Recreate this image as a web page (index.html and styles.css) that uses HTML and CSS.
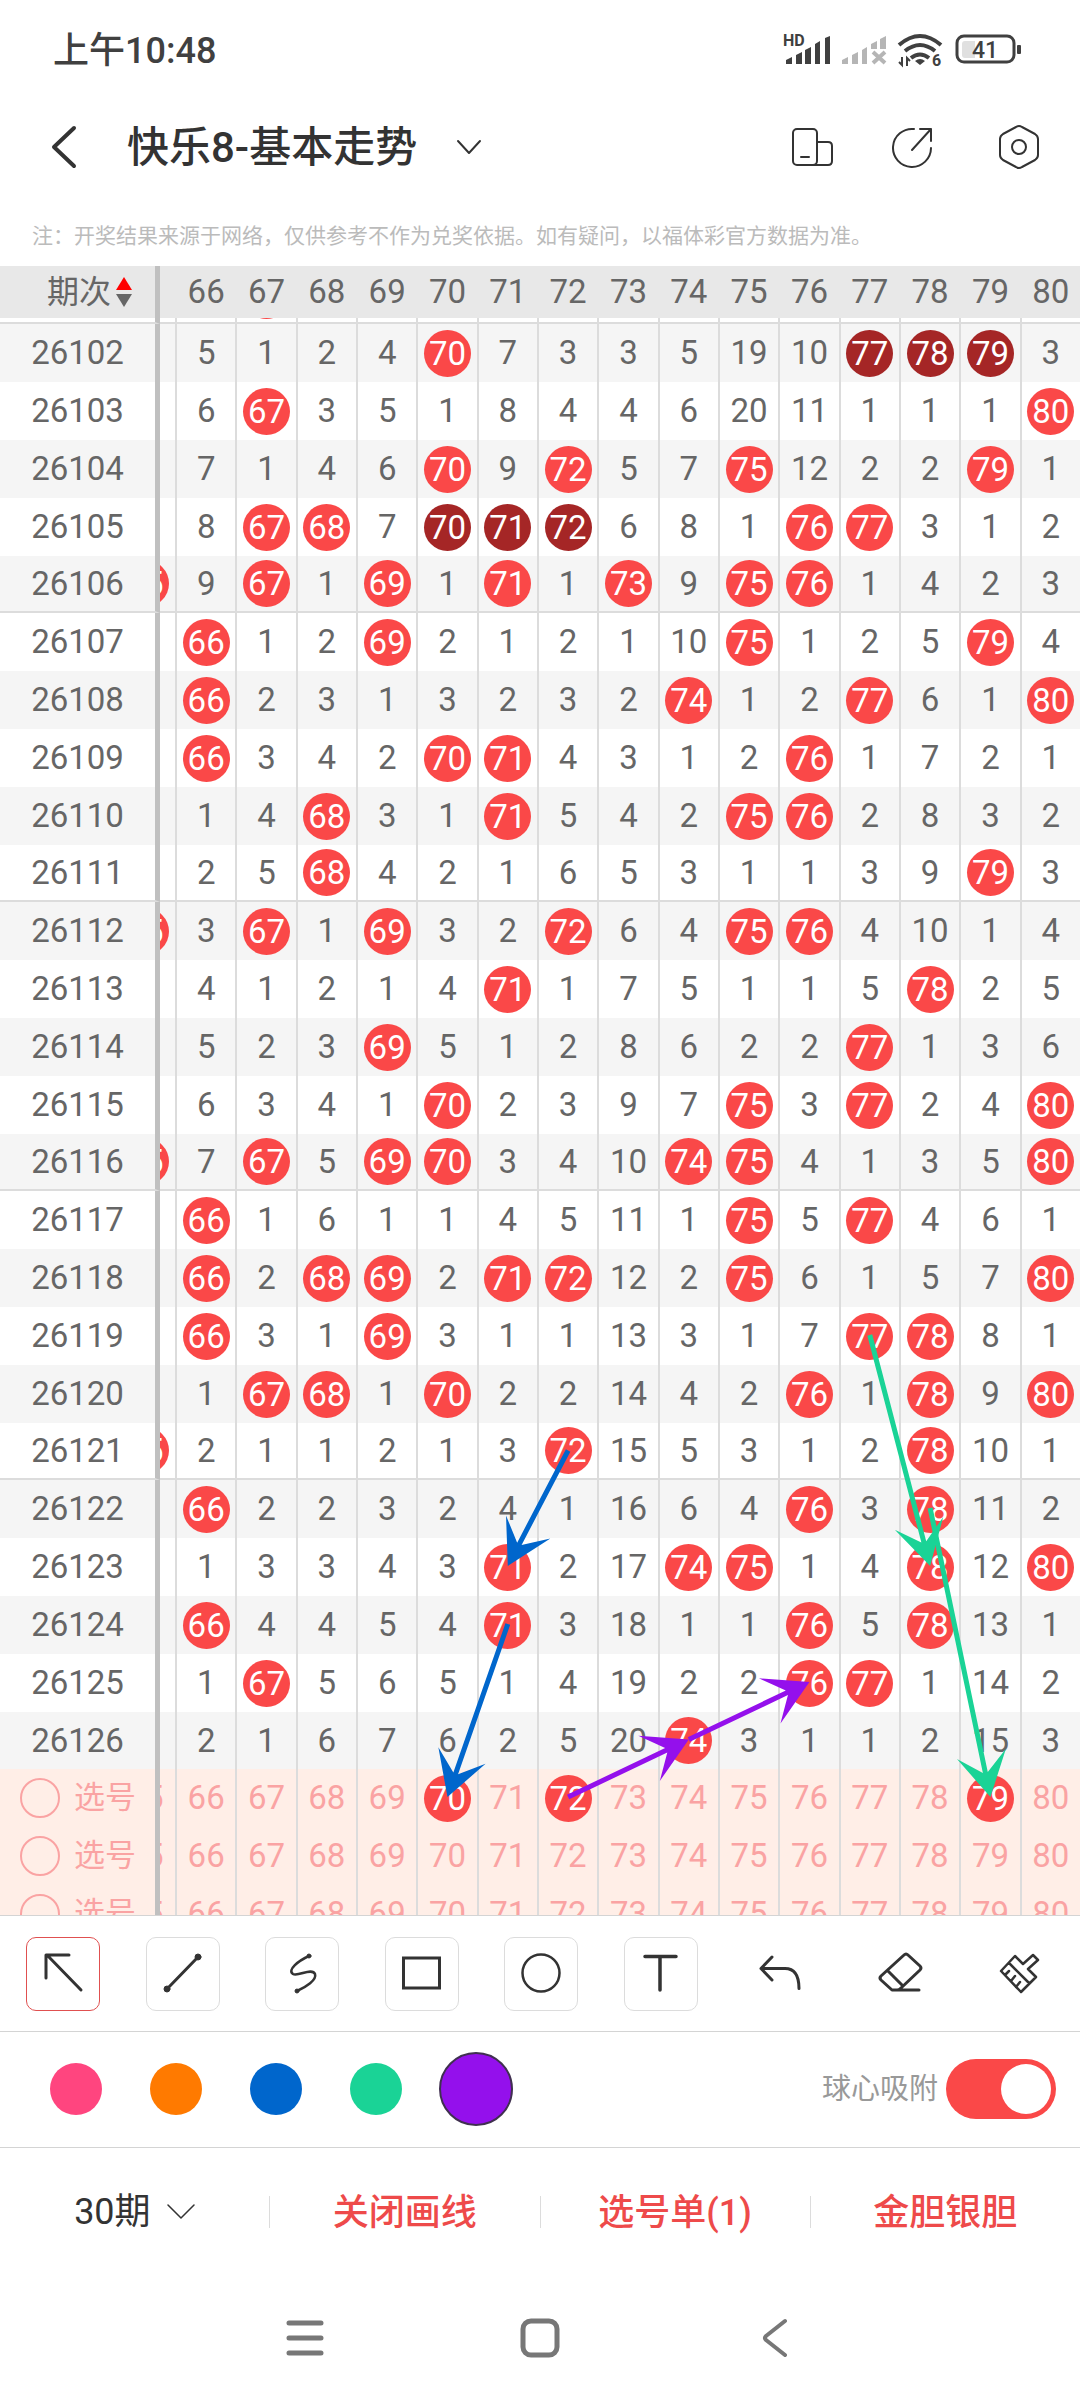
FILE: index.html
```html
<!DOCTYPE html>
<html lang="zh-CN">
<head>
    <meta charset="UTF-8">
    <meta name="viewport" content="width=device-width, initial-scale=1.0">
    <title>快乐8-基本走势</title>
    <link rel="stylesheet" href="styles.css">
</head>
<body>

    <div class="status-bar">
        <span class="time">上午10:48</span>
        <svg class="status-icons" width="240" height="40" viewBox="782 30 240 40">
            <text x="783" y="46" class="hd">HD</text>
            <g fill="#404040">
                <path d="M786 60l6-3v7h-6zM796 55l6-3v12h-6zM805 50l6-3v17h-6zM815 44l5-3v23h-5zM825 38l5-2v28h-5z"/>
            </g>
            <g fill="#b5b5b5">
                <path d="M842 60l6-3v7h-6zM852 55l6-3v12h-6zM862 50l5-3v17h-5zM871 44l6-3v8h-6zM880 39l6-3v13h-6z"/>
                <path d="M873 52l12 11M885 52l-12 11" stroke="#b5b5b5" stroke-width="4"/>
            </g>
            <g fill="none" stroke="#404040" stroke-width="4">
                <path d="M899 45q21 -18 42 0M905 51q15 -12 30 0M911 58q9 -7 18 0"/>
            </g>
            <path d="M915 61q5 -4 10 0l-5 4z" fill="#404040"/>
            <path d="M902 57v8l-3-3M907 66v-8l3 3" fill="none" stroke="#404040" stroke-width="2"/>
            <text x="932" y="66" class="wifi-gen">6</text>
            <rect x="957" y="36" width="57" height="26" rx="7" fill="none" stroke="#404040" stroke-width="3"/>
            <path d="M965 41h10v17h-10q-3 0-3-3v-11q0-3 3-3z" fill="#e0e0e0"/>
            <rect x="1017" y="45" width="4" height="9" rx="1" fill="#404040"/>
            <text x="985" y="58" text-anchor="middle" class="battery">41</text>
        </svg>
    </div>

    <header class="title-bar">
        <button type="button" class="icon-btn back" aria-label="返回">
            <svg width="30" height="46" viewBox="0 0 30 46"><path d="M26 4L6 23l20 19" stroke-width="4"/></svg>
        </button>
        <label class="picker title-picker">
            <select aria-label="走势类型"><option>快乐8-基本走势</option></select>
            <svg width="26" height="16" viewBox="0 0 26 16"><path d="M2 2l11 12L24 2" stroke-width="2"/></svg>
        </label>
        <div class="title-actions">
            <button type="button" class="icon-btn" aria-label="横屏">
                <svg width="46" height="46" viewBox="0 0 46 46"><g stroke-width="2"><rect x="5" y="5" width="24" height="36" rx="4"/><path d="M29 18h11q4 0 4 4v15q0 4-4 4H25M13 33h8"/></g></svg>
            </button>
            <button type="button" class="icon-btn" aria-label="分享">
                <svg width="46" height="46" viewBox="0 0 46 46"><g stroke-width="2"><path d="M22 5a19 19 0 1 0 17 19M28 5h11v12M20 26L39 5"/></g></svg>
            </button>
            <button type="button" class="icon-btn" aria-label="设置">
                <svg width="46" height="46" viewBox="0 0 46 46"><g stroke-width="2"><path d="M20 3q3-2 6 0l13 7q3 2 3 5v16q0 3-3 5l-13 7q-3 2-6 0l-13-7q-3-2-3-5V15q0-3 3-5z"/><circle cx="23" cy="23" r="7"/></g></svg>
            </button>
        </div>
    </header>

    <p class="note">注：开奖结果来源于网络，仅供参考不作为兑奖依据。如有疑问，以福体彩官方数据为准。</p>

    <main class="chart" id="chart">
        <table id="trend">
            <thead><tr id="headRow">
                <th class="issue">
                    <button type="button" class="sort">期次
                        <svg width="16" height="32" viewBox="0 0 16 32"><path d="M8 1l8 13H0z" fill="#f00"/><path d="M8 31l8-13H0z" fill="#666"/></svg>
                    </button>
                </th>
            </tr></thead>
            <tbody id="trendBody"></tbody>
            <tbody id="pickBody"></tbody>
        </table>
        <svg class="lines" id="lines"></svg>
    </main>

    <section class="tools">
        <button type="button" class="tool active" aria-label="箭头"><svg viewBox="0 0 74 74"><path d="M55 53L21 18M43 18H20v23" stroke-width="3"/></svg></button>
        <button type="button" class="tool" aria-label="直线"><svg viewBox="0 0 74 74"><path d="M21 52L52 20" stroke-width="3"/><circle cx="21" cy="52" r="3"/><circle cx="52" cy="20" r="3"/></svg></button>
        <button type="button" class="tool" aria-label="曲线"><svg viewBox="0 0 74 74"><path d="M44 19C33 24 22 33 28 37C33 40 47 30 50 37C52 43 41 50 32 54" stroke-width="2.5"/><circle cx="44" cy="19" r="2"/><circle cx="32" cy="54" r="2"/></svg></button>
        <button type="button" class="tool" aria-label="矩形"><svg viewBox="0 0 74 74"><rect x="18.5" y="21" width="36" height="30" stroke-width="3" stroke-linejoin="miter"/></svg></button>
        <button type="button" class="tool" aria-label="圆形"><svg viewBox="0 0 74 74"><circle cx="37" cy="36" r="18.5" stroke-width="2.5"/></svg></button>
        <button type="button" class="tool" aria-label="文字"><svg viewBox="0 0 74 74"><path d="M21 19.5h31M36 20v33" stroke-width="3.5"/></svg></button>
        <button type="button" class="tool plain" aria-label="撤销"><svg viewBox="0 0 74 74"><path d="M29 20L18 31.5L29 43M18 31.5h24q14 0 14 20" stroke-width="3"/></svg></button>
        <button type="button" class="tool plain" aria-label="橡皮"><svg viewBox="0 0 74 74"><path d="M41 18q2-2 4 0l12 11q2 2 0 4L38 51q-2 2-4 2h-5L18 43q-2-2 0-4zM25 34l14 14M32 53h24" stroke-width="3"/></svg></button>
        <button type="button" class="tool plain" aria-label="清空"><svg viewBox="0 0 74 74"><path d="M33 19l8 8 10-9 5 5-10 9 8 8-15 15-20-21zM27 26l20 20M23 38l4-4M29 44l4-5M34 50l4-5" stroke-width="2.5"/></svg></button>
    </section>

    <section class="palette">
        <label class="swatch pink"><input type="radio" name="color" aria-label="粉色"></label>
        <label class="swatch orange"><input type="radio" name="color" aria-label="橙色"></label>
        <label class="swatch blue"><input type="radio" name="color" aria-label="蓝色"></label>
        <label class="swatch green"><input type="radio" name="color" aria-label="绿色"></label>
        <label class="swatch purple"><input type="radio" name="color" aria-label="紫色" checked></label>
        <label class="snap" for="snap">球心吸附</label>
        <input type="checkbox" class="switch" id="snap" checked>
    </section>

    <section class="actions">
        <label class="picker period">
            <select aria-label="期数"><option>30期</option></select>
            <svg width="28" height="16" viewBox="0 0 28 16"><path d="M1 1l13 13L27 1" stroke-width="1.5"/></svg>
        </label>
        <button type="button">关闭画线</button>
        <button type="button">选号单(1)</button>
        <button type="button">金胆银胆</button>
    </section>

    <nav class="system-nav">
        <button type="button" aria-label="最近任务"><svg viewBox="0 0 48 48"><path d="M8 9h32M8 24h32M8 39h32" stroke-width="5"/></svg></button>
        <button type="button" aria-label="主屏幕"><svg viewBox="0 0 48 48"><rect x="7" y="7" width="34" height="34" rx="8" stroke-width="5"/></svg></button>
        <button type="button" aria-label="返回"><svg viewBox="0 0 48 48"><path d="M34 7L15 22q-2 2 0 4L34 41" stroke-width="4"/></svg></button>
    </nav>

    <script src="script.js"></script>
</body>
</html>
```

FILE: styles.css
```css
* {
    box-sizing: border-box;
}

body {
    margin: 0;
    height: 100vh;
    display: flex;
    flex-direction: column;
    background-color: #fff;
    color: #333;
    font-family: Roboto, "Noto Sans CJK SC", sans-serif;
}

button, select {
    margin: 0;
    padding: 0;
    border: none;
    background: none;
    color: inherit;
    font: inherit;
    appearance: none;
    cursor: pointer;
}

button svg, .picker svg {
    display: block;
    fill: none;
    stroke: #333;
    stroke-linecap: round;
    stroke-linejoin: round;
}

/* status bar */
.status-bar {
    height: 100px;
    padding: 0 58px 0 53px;
    display: flex;
    align-items: center;
    justify-content: space-between;
}

.time {
    padding-bottom: 6px;
    font-size: 36px;
    font-weight: 500;
    color: #404040;
}

.status-icons text {
    fill: #404040;
}

.hd {
    font-size: 16px;
    font-weight: 700;
}

.wifi-gen {
    font-size: 16px;
    font-weight: 700;
}

.battery {
    font-size: 23px;
    font-weight: 500;
}

/* title */
.title-bar {
    height: 94px;
    padding: 0 38px 0 48px;
    display: flex;
    align-items: center;
}

.back {
    margin-right: 49px;
}

.picker {
    display: flex;
    align-items: center;
}

.title-picker {
    gap: 38px;
    font-size: 42px;
    font-weight: 500;
}

.title-actions {
    margin-left: auto;
    display: flex;
    gap: 58px;
}

.note {
    margin: 0;
    padding: 26px 32px 14px;
    font-size: 21px;
    line-height: 32px;
    color: #bbb;
    white-space: nowrap;
}

/* trend chart */
.chart {
    position: relative;
    flex: 1;
    min-height: 0;
    overflow: hidden;
}

table {
    width: calc(100% + 2px);
    table-layout: fixed;
    border-collapse: separate;
    border-spacing: 0;
    font-size: 33px;
    line-height: 40px;
    color: #666;
}

th, td {
    height: 58px;
    padding: 0;
    text-align: center;
    font-weight: 400;
    border-right: 2px solid #dcdcdc;
}

thead th {
    height: 52px;
    background-color: #e8e8e8;
    border-right-color: #e8e8e8;
}

.issue {
    width: 160px;
    border-right: 5px solid #c0c0c0;
}

thead .issue {
    border-right-color: #c0c0c0;
}

/* column 65, scrolled under the issue column */
.edge {
    width: 17px;
    overflow: hidden;
}

.edge div {
    display: flex;
    justify-content: flex-end;
    overflow: hidden;
}

.edge span {
    flex: none;
    width: 60px;
    display: flex;
    justify-content: center;
}

.sort {
    display: flex;
    align-items: center;
    gap: 5px;
    padding-left: 47px;
    font-size: 32px;
}

.sort svg {
    stroke: none;
}

#trendBody tr:nth-child(even) {
    background-color: #f5f5f5;
}

#trendBody tr:nth-child(5n+1) > * {
    height: 57px;
    border-bottom: 2px solid #dcdcdc;
}

#trendBody tr.last > * {
    border-bottom: none;
}

#trendBody tr.peek > * {
    height: 6px;
}

.peek div {
    height: 4px;
    padding-bottom: 3px;
    display: flex;
    align-items: flex-end;
    justify-content: center;
    overflow: hidden;
}

.ball {
    flex: none;
    display: block;
    width: 47px;
    height: 47px;
    margin: 0 auto;
    border-radius: 50%;
    background-color: #fa4848;
    color: #fff;
    line-height: 48px;
}

.ball.dark {
    background-color: #a52626;
}

.edge .ball {
    width: 47px;
    margin: 0;
}

#pickBody tr {
    background-color: #ffeee7;
    color: #faa3a3;
}

.pick {
    display: flex;
    align-items: center;
    gap: 14px;
    padding-left: 20px;
    font-size: 31px;
}

.pick input {
    appearance: none;
    width: 40px;
    height: 40px;
    margin: 0;
    border: 2px solid #faa3a3;
    border-radius: 50%;
}

.lines {
    position: absolute;
    top: 0;
    left: 0;
    width: 100%;
    height: 100%;
    pointer-events: none;
}

/* drawing tools */
.tools, .palette, .actions {
    flex: none;
    height: 116px;
    border-top: 1px solid #d4d4d4;
    display: flex;
    align-items: center;
}

.tools {
    padding: 0 24px 0 26px;
    justify-content: space-between;
}

.tool {
    width: 74px;
    height: 74px;
    border: 1px solid #dcdcdc;
    border-radius: 10px;
}

.tool svg {
    margin: -1px;
    width: 74px;
    height: 74px;
}

.tool circle[r="2"], .tool circle[r="3"] {
    fill: #333;
}

.tool.active {
    border-color: #e05050;
}

.tool.plain {
    border-color: transparent;
}

.palette {
    padding: 0 24px 2px 26px;
}

.swatch {
    width: 100px;
    display: flex;
    justify-content: center;
}

.swatch input {
    appearance: none;
    width: 52px;
    height: 52px;
    margin: 0;
    border-radius: 50%;
    color: inherit;
    background-color: currentColor;
}

.swatch input:checked {
    width: 74px;
    height: 74px;
    border: 2px solid #403050;
}

.pink { color: #ff457f; }
.orange { color: #ff7a00; }
.blue { color: #0066cc; }
.green { color: #1ad396; }
.purple { color: #9410ec; }

.snap {
    margin-left: auto;
    margin-right: 8px;
    padding-bottom: 6px;
    font-size: 29px;
    color: #999;
}

.switch {
    appearance: none;
    width: 110px;
    height: 60px;
    margin: 0;
    padding: 5px;
    border-radius: 30px;
    background-color: #ccc;
    display: flex;
}

.switch::before {
    content: "";
    width: 50px;
    height: 50px;
    border-radius: 50%;
    background-color: #fff;
}

.switch:checked {
    background-color: #fa4848;
    justify-content: flex-end;
}

/* bottom actions */
.actions {
    height: 128px;
    font-size: 36px;
    font-weight: 500;
}

.actions > * {
    flex: 1;
    height: 32px;
    display: flex;
    align-items: center;
    justify-content: center;
}

.actions > button {
    padding-bottom: 6px;
    color: #ee4a4a;
    border-left: 1px solid #dcdcdc;
}

.period {
    gap: 16px;
    font-weight: 400;
}

.system-nav {
    flex: none;
    height: 125px;
    display: flex;
    align-items: center;
    justify-content: center;
    gap: 187px;
}

.system-nav svg {
    width: 48px;
    height: 48px;
    stroke: #777;
}
```

FILE: script.js
```js
// * = drawn number, ! = drawn in a run of three, otherwise the number of misses
var rows = [
    ["26102", "5 1 2 4 * 7 3 3 5 19 10 ! ! ! 3"],
    ["26103", "6 * 3 5 1 8 4 4 6 20 11 1 1 1 *"],
    ["26104", "7 1 4 6 * 9 * 5 7 * 12 2 2 * 1"],
    ["26105", "8 * * 7 ! ! ! 6 8 1 * * 3 1 2"],
    ["26106", "9 * 1 * 1 * 1 * 9 * * 1 4 2 3", true],
    ["26107", "* 1 2 * 2 1 2 1 10 * 1 2 5 * 4"],
    ["26108", "* 2 3 1 3 2 3 2 * 1 2 * 6 1 *"],
    ["26109", "* 3 4 2 * * 4 3 1 2 * 1 7 2 1"],
    ["26110", "1 4 * 3 1 * 5 4 2 * * 2 8 3 2"],
    ["26111", "2 5 * 4 2 1 6 5 3 1 1 3 9 * 3"],
    ["26112", "3 * 1 * 3 2 * 6 4 * * 4 10 1 4", true],
    ["26113", "4 1 2 1 4 * 1 7 5 1 1 5 * 2 5"],
    ["26114", "5 2 3 * 5 1 2 8 6 2 2 * 1 3 6"],
    ["26115", "6 3 4 1 * 2 3 9 7 * 3 * 2 4 *"],
    ["26116", "7 * 5 * * 3 4 10 * * 4 1 3 5 *", true],
    ["26117", "* 1 6 1 1 4 5 11 1 * 5 * 4 6 1"],
    ["26118", "* 2 * * 2 * * 12 2 * 6 1 5 7 *"],
    ["26119", "* 3 1 * 3 1 1 13 3 1 7 * * 8 1"],
    ["26120", "1 * * 1 * 2 2 14 4 2 * 1 * 9 *"],
    ["26121", "2 1 1 2 1 3 * 15 5 3 1 2 * 10 1", true],
    ["26122", "* 2 2 3 2 4 1 16 6 4 * 3 * 11 2"],
    ["26123", "1 3 3 4 3 * 2 17 * * 1 4 * 12 *"],
    ["26124", "* 4 4 5 4 * 3 18 1 1 * 5 * 13 1"],
    ["26125", "1 * 5 6 5 1 4 19 2 2 * * 1 14 2"],
    ["26126", "2 1 6 7 6 2 5 20 * 3 1 1 2 15 3"]
];
var picked = [[70, 72, 79], [], []];
var arrows = [
    ["#0066cc", "26121-72", "26123-71"],
    ["#0066cc", "26124-71", "pick0-70"],
    ["#1ad396", "26119-77", "26123-78"],
    ["#1ad396", "26122-78", "pick0-79"],
    ["#9410ec", "pick0-72", "26126-74"],
    ["#9410ec", "26126-74", "26125-76"]
];

function ball(n, dark) {
    return '<span class="ball' + (dark ? ' dark' : '') + '">' + n + '</span>';
}

function buildTable() {
    var head = '<th class="edge"></th>';
    var peek = '<tr class="peek"><td class="issue"></td><td class="edge"></td>';
    for (var n = 66; n <= 80; n++) {
        head += '<th>' + n + '</th>';
        peek += '<td><div>' + (n === 67 ? '<span class="ball"></span>' : '') + '</div></td>';
    }
    document.getElementById("headRow").innerHTML += head;

    var html = peek + '</tr>';
    rows.forEach(function (row, i) {
        html += '<tr' + (i === rows.length - 1 ? ' class="last"' : '') + '><td class="issue">' + row[0] + '</td>';
        html += '<td class="edge">' + (row[2] ? '<div><span>' + ball(65) + '</span></div>' : '') + '</td>';
        row[1].split(" ").forEach(function (v, c) {
            var num = 66 + c;
            html += '<td id="c' + row[0] + '-' + num + '">' + (v === "*" || v === "!" ? ball(num, v === "!") : v) + '</td>';
        });
        html += '</tr>';
    });
    document.getElementById("trendBody").innerHTML = html;

    html = '';
    picked.forEach(function (nums, i) {
        html += '<tr><td class="issue"><label class="pick"><input type="checkbox">选号</label></td>';
        html += '<td class="edge"><div><span>65</span></div></td>';
        for (var n = 66; n <= 80; n++) {
            html += '<td id="cpick' + i + '-' + n + '"><button type="button"' +
                (nums.indexOf(n) >= 0 ? ' class="ball"' : '') + '>' + n + '</button></td>';
        }
        html += '</tr>';
    });
    document.getElementById("pickBody").innerHTML = html;
}

function center(id) {
    var box = document.getElementById("chart").getBoundingClientRect();
    var r = document.getElementById("c" + id).getBoundingClientRect();
    return [r.left + r.width / 2 - box.left - 1, r.top + r.height / 2 - box.top - 1];
}

function drawArrows() {
    var svg = '';
    arrows.forEach(function (a) {
        var p = center(a[1]), q = center(a[2]);
        var dx = q[0] - p[0], dy = q[1] - p[1];
        var len = Math.sqrt(dx * dx + dy * dy);
        var angle = Math.atan2(dy, dx) * 180 / Math.PI;
        svg += '<path fill="' + a[0] + '" transform="translate(' + p[0] + ' ' + p[1] + ') rotate(' + angle + ')" ' +
            'd="M0 -2.5H' + (len - 25) + 'L' + (len - 44) + ' -25L' + len + ' 0L' + (len - 44) + ' 25L' + (len - 25) + ' 2.5H0z"/>';
    });
    document.getElementById("lines").innerHTML = svg;
}

buildTable();
drawArrows();
window.addEventListener("resize", drawArrows);
```
